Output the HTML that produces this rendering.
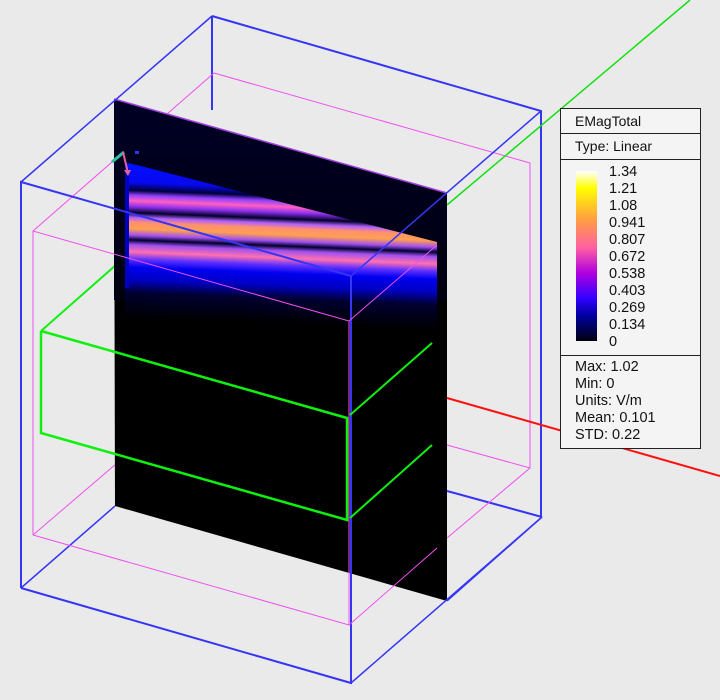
<!DOCTYPE html>
<html><head><meta charset="utf-8"><style>
html,body{margin:0;padding:0;background:#eaeaea;}
.wrap{position:relative;width:720px;height:700px;overflow:hidden;background:#eaeaea;font-family:"Liberation Sans",sans-serif;}
svg{position:absolute;left:0;top:0;}
.leg{position:absolute;left:560px;top:108px;width:139px;height:339px;border:1px solid #222;background:#f4f4f4;font-size:14px;color:#111;}
.leg .r{border-bottom:1px solid #222;padding-left:14px;}
.cb{position:absolute;left:15px;top:62px;width:21px;height:170px;background:linear-gradient(to bottom,#ffffff 0%,#ffff00 10%,#ffa040 28%,#ff60a0 45%,#b000e0 60%,#3000ff 75%,#0000a0 85%,#000010 100%);}
.lab{position:absolute;left:48px;top:55px;line-height:17px;font-size:14.5px;}
.st{position:absolute;left:14px;top:250px;line-height:17px;font-size:14.5px;}
</style></head><body><div class="wrap">
<svg width="720" height="700" viewBox="0 0 720 700">
<defs>
<linearGradient id="bands" gradientUnits="userSpaceOnUse" x1="0" y1="158" x2="0" y2="318" gradientTransform="translate(0,-5) skewY(2.3)">
<stop offset="0" stop-color="#000018"/>
<stop offset="0.04" stop-color="#0010ff"/>
<stop offset="0.15" stop-color="#0808f0"/>
<stop offset="0.2" stop-color="#00003a"/>
<stop offset="0.23" stop-color="#9040ff"/>
<stop offset="0.265" stop-color="#ff60c0"/>
<stop offset="0.30" stop-color="#9030f0"/>
<stop offset="0.34" stop-color="#00002a"/>
<stop offset="0.37" stop-color="#b060ff"/>
<stop offset="0.4" stop-color="#ff9070"/>
<stop offset="0.44" stop-color="#ffa050"/>
<stop offset="0.48" stop-color="#a050f0"/>
<stop offset="0.51" stop-color="#000030"/>
<stop offset="0.54" stop-color="#a050f0"/>
<stop offset="0.585" stop-color="#ff70b0"/>
<stop offset="0.63" stop-color="#6030ff"/>
<stop offset="0.68" stop-color="#0000f0"/>
<stop offset="0.76" stop-color="#0000c0"/>
<stop offset="0.84" stop-color="#000030"/>
<stop offset="1" stop-color="#000000"/>
</linearGradient>
<linearGradient id="top" gradientUnits="userSpaceOnUse" x1="0" y1="100" x2="0" y2="300">
<stop offset="0" stop-color="#000025"/><stop offset="0.5" stop-color="#00001a"/><stop offset="1" stop-color="#000010"/>
</linearGradient>
</defs>
<g fill="none">
<line x1="212" y1="16" x2="212" y2="110" stroke="#3535f5" stroke-width="2"/>
<polyline points="212,16 541,111 541,517" stroke="#3535f5" stroke-width="2"/>
<polyline points="214,73 530,163 530,468 447,445" stroke="#f050f0" stroke-width="1"/>
<line x1="447" y1="491" x2="542" y2="517" stroke="#3535f5" stroke-width="2"/>
<line x1="447" y1="205" x2="690" y2="0" stroke="#10e010" stroke-width="1.5"/>
<line x1="447" y1="398" x2="720" y2="476" stroke="#ff1010" stroke-width="2"/>
<line x1="21" y1="588" x2="115" y2="506" stroke="#3535f5" stroke-width="1.5"/>
<line x1="33" y1="535" x2="123" y2="458" stroke="#f050f0" stroke-width="1"/>
<line x1="33" y1="231" x2="214" y2="73" stroke="#f050f0" stroke-width="1"/>
<line x1="41" y1="331" x2="125" y2="257" stroke="#10f010" stroke-width="2"/>
<line x1="530" y1="468" x2="447" y2="538" stroke="#f050f0" stroke-width="1"/>
<line x1="542" y1="517" x2="447" y2="601" stroke="#3535f5" stroke-width="1.5"/>
</g>
<polygon points="114,99 447,193 447,601 115,506" fill="#000"/>
<polygon points="114,99 447,193 447,300 114,300" fill="url(#top)"/>
<polygon points="125,162 437,242 437,330 125,330" fill="url(#bands)"/>
<rect x="125" y="168" width="4" height="120" fill="#0000c0"/>
<line x1="114" y1="99" x2="447" y2="193" stroke="#a040e0" stroke-width="1.5"/>
<line x1="124" y1="152" x2="112" y2="162" stroke="#30c0a0" stroke-width="3"/>
<line x1="123" y1="152" x2="128" y2="173" stroke="#e060a0" stroke-width="2"/>
<polygon points="124,170 131,170 128,176" fill="#e060a0"/>
<rect x="135" y="151" width="4" height="3" fill="#3030ff"/>
<g fill="none">
<polyline points="21,588 21,182 351,276 351,683 21,588" stroke="#3535f5" stroke-width="2"/>
<polyline points="351,276 541,111" stroke="#3535f5" stroke-width="1.5"/>
<polyline points="351,683 542,517" stroke="#3535f5" stroke-width="1.5"/>
<polyline points="21,182 212,16" stroke="#3535f5" stroke-width="1.5"/>
<polyline points="33,535 33,231 349,321 349,625 33,535" stroke="#f050f0" stroke-width="1"/>
<line x1="349" y1="321" x2="437" y2="245" stroke="#f050f0" stroke-width="1"/>
<line x1="349" y1="625" x2="437" y2="548" stroke="#f050f0" stroke-width="1"/>
<polyline points="41,331 347,418 347,520 41,433 41,331" stroke="#10f010" stroke-width="2.5"/>
<line x1="350" y1="415" x2="432" y2="343" stroke="#10f010" stroke-width="2"/>
<line x1="350" y1="518" x2="432" y2="445" stroke="#10f010" stroke-width="2"/>
</g>
</svg>
<div class="leg">
<div class="r" style="height:24px;line-height:24px;">EMagTotal</div>
<div class="r" style="height:25px;line-height:25px;">Type: Linear</div>
<div class="cb"></div>
<div class="lab">1.34<br>1.21<br>1.08<br>0.941<br>0.807<br>0.672<br>0.538<br>0.403<br>0.269<br>0.134<br>0</div>
<div style="position:absolute;left:0;top:246px;width:139px;border-top:1px solid #222;"></div>
<div class="st">Max: 1.02<br>Min: 0<br>Units: V/m<br>Mean: 0.101<br>STD: 0.22</div>
</div>
</div></body></html>
